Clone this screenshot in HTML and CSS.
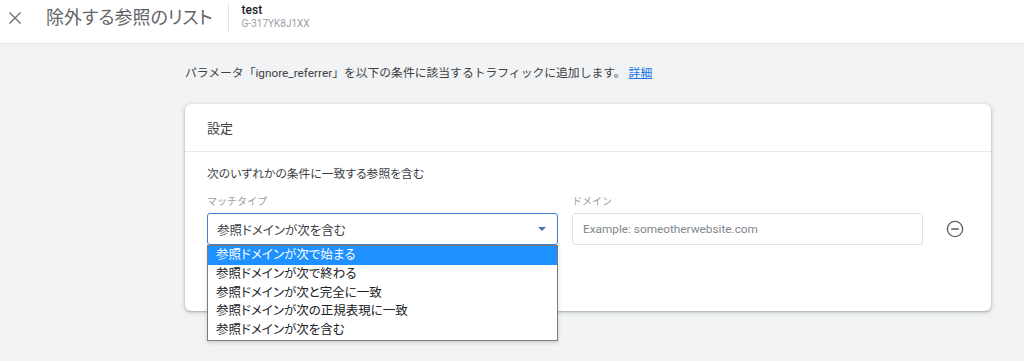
FILE: index.html
```html
<!DOCTYPE html>
<html lang="ja">
<head>
<meta charset="utf-8">
<title>除外する参照のリスト</title>
<link rel="stylesheet" href="styles.css">
</head>
<body>
<header class="topbar">
  <span class="close-icon">
    <svg width="14" height="14" viewBox="0 0 14 14"><path d="M1.5 1.5 L12.5 12.5 M12.5 1.5 L1.5 12.5" stroke="#6b6f73" stroke-width="1.4" fill="none"/></svg>
  </span>
  <h1 class="title">除外する参照のリスト</h1>
  <span class="divider"></span>
  <div class="property">
    <div class="property-name">test</div>
    <div class="property-id">G-317YK8J1XX</div>
  </div>
</header>
<main class="main">
  <p class="description">パラメータ「ignore_referrer」を以下の条件に該当するトラフィックに追加します。 <a href="#" class="link">詳細</a></p>
  <section class="card">
    <div class="card-header">設定</div>
    <div class="card-body">
      <p class="subtitle">次のいずれかの条件に一致する参照を含む</p>
      <div class="row">
        <div class="field">
          <div class="label">マッチタイプ</div>
          <div class="select">
            <span class="select-text">参照ドメインが次を含む</span>
            <span class="arrow"></span>
            <ul class="menu">
              <li class="menu-item active">参照ドメインが次で始まる</li>
              <li class="menu-item">参照ドメインが次で終わる</li>
              <li class="menu-item">参照ドメインが次と完全に一致</li>
              <li class="menu-item">参照ドメインが次の正規表現に一致</li>
              <li class="menu-item">参照ドメインが次を含む</li>
            </ul>
          </div>
        </div>
        <div class="field">
          <div class="label">ドメイン</div>
          <div class="input"><span class="placeholder">Example: someotherwebsite.com</span></div>
        </div>
        <span class="remove-icon">
          <svg width="18" height="18" viewBox="0 0 18 18"><circle cx="9" cy="9" r="7.6" stroke="#5f6368" stroke-width="1.4" fill="none"/><path d="M5.2 9 H12.8" stroke="#5f6368" stroke-width="1.6"/></svg>
        </span>
      </div>
    </div>
  </section>
</main>
</body>
</html>
```

FILE: styles.css
```css
* { box-sizing: border-box; }
html, body { margin: 0; padding: 0; }
body {
  background: #f1f3f4;
  font-family: Roboto, "Noto Sans CJK JP", sans-serif;
  font-feature-settings: "palt";
  color: #3c4043;
  height: 361px;
  overflow: hidden;
}
.topbar {
  display: flex;
  align-items: center;
  height: 44px;
  padding: 0 0 8px 8px;
  background: #fff;
  border-bottom: 1px solid #e3e5e8;
}
.close-icon { display: flex; width: 14px; height: 14px; }
.title {
  margin: 0 0 0 24px;
  font-size: 18px;
  font-weight: 400;
  color: #5f6368;
  line-height: 24px;
}
.divider {
  width: 1px;
  height: 27px;
  background: #e0e2e5;
  margin: 0 13px 0 15px;
}
.property { display: flex; flex-direction: column; margin-top: -2px; }
.property-name { font-size: 12px; font-weight: 500; color: #202124; line-height: 14px; }
.property-id { font-size: 10px; color: #9aa0a6; line-height: 14px; }

.main { padding: 21px 0 0 185px; }
.description {
  margin: 0;
  font-size: 11.8px;
  line-height: 16px;
  color: #3c4043;
  font-feature-settings: normal;
}
.link { color: #1a73e8; text-decoration: underline; }

.card {
  width: 806px;
  margin-top: 23px;
  background: #fff;
  border-radius: 6px;
  box-shadow: 0 1px 2px rgba(60,64,67,.3), 0 1px 4px 1px rgba(60,64,67,.15);
}
.card-header {
  height: 48px;
  display: flex;
  align-items: center;
  padding-left: 22px;
  font-size: 13px;
  color: #3c4043;
  border-bottom: 1px solid #e8eaed;
}
.card-body { padding: 14px 22px 66px 22px; }
.subtitle {
  margin: 0;
  font-size: 11.8px;
  line-height: 16px;
  color: #3c4043;
}
.row { display: flex; align-items: flex-end; margin-top: 13px; }
.field { display: flex; flex-direction: column; width: 351px; margin-right: 14px; }
.label {
  font-size: 10px;
  line-height: 14px;
  color: #9aa0a6;
  margin-bottom: 4px;
  font-feature-settings: normal;
}
.select {
  position: relative;
  height: 32px;
  border: 1px solid #3b7fd4;
  border-radius: 3px;
  display: flex;
  align-items: center;
  padding-left: 9px;
}
.select-text { font-size: 12.5px; color: #3c4043; flex: 1; }
.arrow {
  width: 0; height: 0;
  border-left: 4px solid transparent;
  border-right: 4px solid transparent;
  border-top: 4px solid #4a72b0;
  margin-right: 11px;
}
.menu {
  position: absolute;
  top: 31px;
  left: -1px;
  width: 351px;
  margin: 0;
  padding: 0;
  list-style: none;
  background: #fff;
  border: 1px solid #7a7a7a;
  box-shadow: 0 2px 4px rgba(0,0,0,.15);
  z-index: 2;
}
.menu-item {
  height: 18.8px;
  line-height: 18.8px;
  padding-left: 8px;
  font-size: 12.5px;
  color: #202124;
}
.menu-item.active { background: #1e90ff; color: #fff; }
.input {
  height: 32px;
  border: 1px solid #dfe1e5;
  border-radius: 3px;
  display: flex;
  align-items: center;
  padding-left: 10px;
}
.placeholder { font-size: 11.8px; color: #80868b; }
.remove-icon { display: flex; margin: 0 0 7px 9px; }
```
